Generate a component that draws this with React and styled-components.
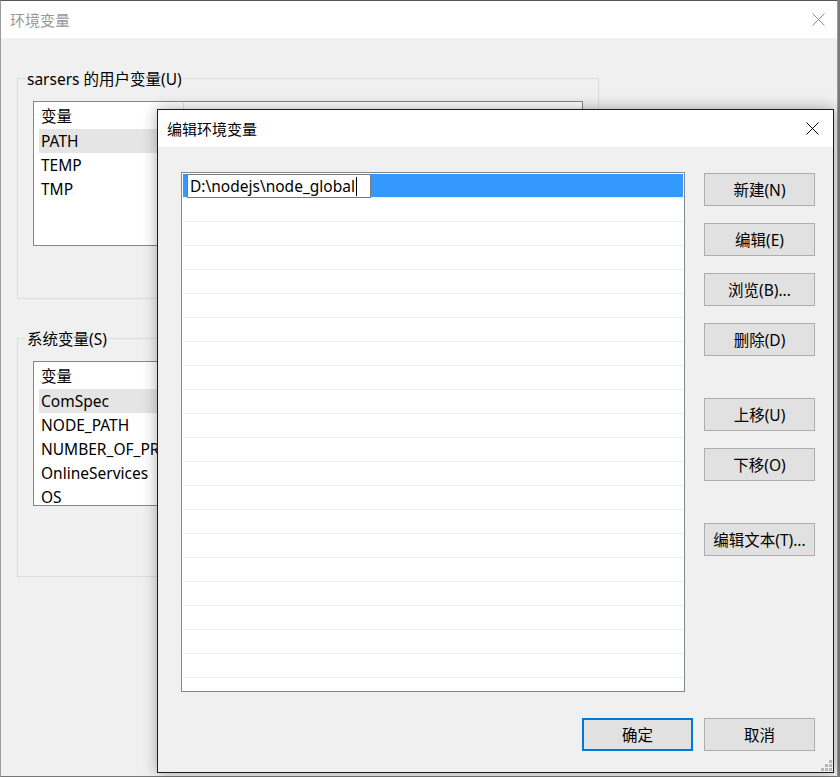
import React from 'react';
import styled, { createGlobalStyle } from 'styled-components';

const GlobalStyle = createGlobalStyle`
	html, body {
		margin: 0;
		padding: 0;
	}
	body {
		width: 840px;
		height: 777px;
		overflow: hidden;
		background: #7a7a7a;
		font-family: "Noto Sans", "Noto Sans CJK SC", sans-serif;
		font-size: 15.5px;
		color: #000;
	}
`;

// BACK WINDOW //

const Window = styled.div`
	position: relative;
	width: 838px;
	height: 777px;
	box-sizing: border-box;
	border: 1px solid #9a9a9a;
	border-top-color: #555;
	border-bottom-color: #777;
	background: #f0f0f0;
	display: flex;
	flex-direction: column;
`;

const TitleBar = styled.div`
	height: 37px;
	flex-shrink: 0;
	display: flex;
	align-items: center;
	justify-content: space-between;
	padding: 0 ${({ $right }) => $right}px 0 9px;
	background: #fff;
`;

const TitleText = styled.span`
	font-size: 15px;
	line-height: 20px;
	color: ${({ $active }) => ($active ? '#000' : '#999')};
`;

const WindowBody = styled.div`
	flex: 1;
	padding: 40px 0 0 16px;
`;

const GroupBox = styled.div`
	position: relative;
	width: 582px;
	height: ${({ $h }) => $h}px;
	box-sizing: border-box;
	border: 1px solid #dcdcdc;
	margin-top: ${({ $top }) => $top || 0}px;
`;

const GroupLabel = styled.span`
	position: absolute;
	top: -10px;
	left: 8px;
	padding: 0 1px;
	background: #f0f0f0;
	line-height: 20px;
	white-space: nowrap;
`;

const VarList = styled.div`
	margin: 22px 0 0 15px;
	width: 550px;
	height: 145px;
	box-sizing: border-box;
	border: 1px solid #828790;
	background: #fff;
	overflow: hidden;
`;

const VarHeader = styled.div`
	height: 27px;
	display: flex;
`;

const HeaderCell = styled.div`
	width: 150px;
	box-sizing: border-box;
	padding: 2px 0 0 7px;
	line-height: 24px;
	border-right: 1px solid #e5e5e5;
`;

const VarRow = styled.div`
	height: 24px;
	line-height: 24px;
	margin-left: 5px;
	padding-left: 2px;
	white-space: nowrap;
	background: ${({ $selected }) => ($selected ? '#e5e5e5' : 'transparent')};
`;

// END BACK WINDOW //

// EDIT DIALOG //

const Dialog = styled.div`
	position: absolute;
	left: 156px;
	top: 108px;
	width: 677px;
	height: 664px;
	box-sizing: border-box;
	border: 1px solid #1c1c1c;
	background: #f0f0f0;
	box-shadow: 0 0 14px rgba(0, 0, 0, 0.32);
	display: flex;
	flex-direction: column;
`;

const DialogBody = styled.div`
	flex: 1;
	display: grid;
	grid-template-columns: 504px 111px;
	grid-template-rows: 520px 33px;
	column-gap: 19px;
	row-gap: 26px;
	padding: 25px 18px 21px 23px;
`;

const PathList = styled.div`
	box-sizing: border-box;
	border: 1px solid #828790;
	background: #fff;
	padding: 1px;
	overflow: hidden;
`;

const PathRow = styled.div`
	height: 24px;
	box-sizing: border-box;
	border-bottom: 1px solid #efefef;
	background: ${({ $selected }) => ($selected ? '#3399ff' : '#fff')};
	background-clip: padding-box;
	display: flex;
`;

const EditBox = styled.div`
	margin-left: 4px;
	width: 184px;
	height: 24px;
	box-sizing: border-box;
	border: 1px solid #7a7a7a;
	background: #fff;
	padding: 0 2px;
	line-height: 21px;
	white-space: nowrap;
	display: flex;
	align-items: center;
`;

const Caret = styled.span`
	display: inline-block;
	width: 1px;
	height: 19px;
	background: #000;
	margin-left: 1px;
`;

const ButtonColumn = styled.div`
	display: flex;
	flex-direction: column;
	gap: 17px;
	padding-top: 1px;
`;

const Button = styled.div`
	width: 111px;
	height: 33px;
	box-sizing: border-box;
	flex-shrink: 0;
	border: ${({ $default }) => ($default ? '2px solid #0078d7' : '1px solid #adadad')};
	background: #e1e1e1;
	display: flex;
	align-items: center;
	justify-content: center;
	line-height: 20px;
	white-space: nowrap;
	margin-top: ${({ $spaced }) => ($spaced ? 25 : 0)}px;
`;

const Footer = styled.div`
	grid-column: 1 / span 2;
	display: flex;
	justify-content: flex-end;
	gap: 11px;
`;

const Grip = styled.svg`
	position: absolute;
	right: 1px;
	bottom: 1px;
`;

// END EDIT DIALOG //

const CloseIcon = ({ color }) => (
	<svg width="13" height="13" viewBox="0 0 13 13">
		<path d="M0.5 0.5 L12.5 12.5 M12.5 0.5 L0.5 12.5" stroke={color} strokeWidth="1" fill="none" />
	</svg>
);

const userVars = ['PATH', 'TEMP', 'TMP'];
const systemVars = ['ComSpec', 'NODE_PATH', 'NUMBER_OF_PROCESSORS', 'OnlineServices', 'OS'];

const VariableBox = ({ items }) => (
	<VarList>
		<VarHeader>
			<HeaderCell>变量</HeaderCell>
		</VarHeader>
		{items.map((name, i) => (
			<VarRow key={name} $selected={i === 0}>
				{name}
			</VarRow>
		))}
	</VarList>
);

export default function App() {
	const rows = Array.from({ length: 22 }, (_, i) => i);
	const grip = [
		[8, 0],
		[4, 4],
		[8, 4],
		[0, 8],
		[4, 8],
		[8, 8],
	];

	return (
		<>
			<GlobalStyle />
			<Window>
				<TitleBar $right={12}>
					<TitleText>环境变量</TitleText>
					<CloseIcon color="#8a8a8a" />
				</TitleBar>
				<WindowBody>
					<GroupBox $h={221}>
						<GroupLabel>sarsers 的用户变量(U)</GroupLabel>
						<VariableBox items={userVars} />
					</GroupBox>
					<GroupBox $h={239} $top={39}>
						<GroupLabel>系统变量(S)</GroupLabel>
						<VariableBox items={systemVars} />
					</GroupBox>
				</WindowBody>

				<Dialog>
					<TitleBar $right={14}>
						<TitleText $active>编辑环境变量</TitleText>
						<CloseIcon color="#000" />
					</TitleBar>
					<DialogBody>
						<PathList>
							{rows.map((i) =>
								i === 0 ? (
									<PathRow key={i} $selected>
										<EditBox>
											{'D:\\nodejs\\node_global'}
											<Caret />
										</EditBox>
									</PathRow>
								) : (
									<PathRow key={i} />
								)
							)}
						</PathList>
						<ButtonColumn>
							<Button>新建(N)</Button>
							<Button>编辑(E)</Button>
							<Button>浏览(B)...</Button>
							<Button>删除(D)</Button>
							<Button $spaced>上移(U)</Button>
							<Button>下移(O)</Button>
							<Button $spaced>编辑文本(T)...</Button>
						</ButtonColumn>
						<Footer>
							<Button $default>确定</Button>
							<Button>取消</Button>
						</Footer>
					</DialogBody>
					<Grip width="11" height="11" viewBox="0 0 11 11">
						{grip.map(([x, y]) => (
							<rect key={`${x}-${y}`} x={x} y={y} width="3" height="3" fill="#b8b8b8" />
						))}
					</Grip>
				</Dialog>
			</Window>
		</>
	);
}
